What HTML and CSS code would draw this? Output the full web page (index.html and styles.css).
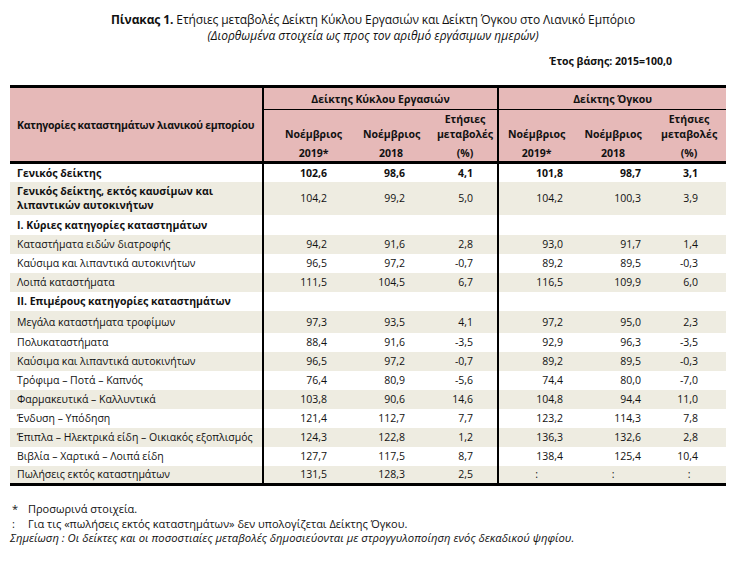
FILE: index.html
```html
<!DOCTYPE html>
<html lang="el">
<head>
    <meta charset="UTF-8">
    <title>Πίνακας 1</title>
    <link rel="stylesheet" href="styles.css">
</head>
<body>
    <div class="page">
        <div class="caption">
            <div class="title"><b>Πίνακας 1.</b> Ετήσιες μεταβολές Δείκτη Κύκλου Εργασιών και Δείκτη Όγκου στο Λιανικό Εμπόριο</div>
            <div class="subtitle">(Διορθωμένα στοιχεία ως προς τον αριθμό εργάσιμων ημερών)</div>
        </div>

        <div class="base-year">Έτος βάσης: 2015=100,0</div>

        <table class="stats">
            <colgroup>
                <col style="width:253px">
                <col style="width:100px">
                <col style="width:56px">
                <col style="width:79px">
                <col style="width:76px">
                <col style="width:78px">
                <col style="width:74px">
            </colgroup>
            <thead>
                <tr class="group-row">
                    <th rowspan="2" class="cat-head">Κατηγορίες καταστημάτων λιανικού εμπορίου</th>
                    <th colspan="3" class="sep">Δείκτης Κύκλου Εργασιών</th>
                    <th colspan="3" class="sep">Δείκτης Όγκου</th>
                </tr>
                <tr class="sub-row">
                    <th class="sep"><span class="l1"></span><span class="l2">Νοέμβριος</span><span class="l3">2019*</span></th>
                    <th><span class="l1"></span><span class="l2">Νοέμβριος</span><span class="l3">2018</span></th>
                    <th class="pct"><span class="l1">Ετήσιες</span><span class="l2">μεταβολές</span><span class="l3">(%)</span></th>
                    <th class="sep"><span class="l1"></span><span class="l2">Νοέμβριος</span><span class="l3">2019*</span></th>
                    <th><span class="l1"></span><span class="l2">Νοέμβριος</span><span class="l3">2018</span></th>
                    <th><span class="l1">Ετήσιες</span><span class="l2">μεταβολές</span><span class="l3">(%)</span></th>
                </tr>
            </thead>
            <tbody>
                <tr class="bold">
                    <td>Γενικός δείκτης</td>
                    <td class="sep">102,6</td><td>98,6</td><td>4,1</td>
                    <td class="sep">101,8</td><td>98,7</td><td>3,1</td>
                </tr>
                <tr class="shade double">
                    <td class="label-bold">Γενικός δείκτης, εκτός καυσίμων και<br>λιπαντικών αυτοκινήτων</td>
                    <td class="sep">104,2</td><td>99,2</td><td>5,0</td>
                    <td class="sep">104,2</td><td>100,3</td><td>3,9</td>
                </tr>
                <tr class="roomy">
                    <td class="label-bold">Ι. Κύριες κατηγορίες καταστημάτων</td>
                    <td class="sep"></td><td></td><td></td>
                    <td class="sep"></td><td></td><td></td>
                </tr>
                <tr class="shade">
                    <td>Καταστήματα ειδών διατροφής</td>
                    <td class="sep">94,2</td><td>91,6</td><td>2,8</td>
                    <td class="sep">93,0</td><td>91,7</td><td>1,4</td>
                </tr>
                <tr>
                    <td>Καύσιμα και λιπαντικά αυτοκινήτων</td>
                    <td class="sep">96,5</td><td>97,2</td><td>-0,7</td>
                    <td class="sep">89,2</td><td>89,5</td><td>-0,3</td>
                </tr>
                <tr class="shade">
                    <td>Λοιπά καταστήματα</td>
                    <td class="sep">111,5</td><td>104,5</td><td>6,7</td>
                    <td class="sep">116,5</td><td>109,9</td><td>6,0</td>
                </tr>
                <tr>
                    <td class="label-bold">ΙΙ. Επιμέρους κατηγορίες καταστημάτων</td>
                    <td class="sep"></td><td></td><td></td>
                    <td class="sep"></td><td></td><td></td>
                </tr>
                <tr class="shade tall">
                    <td>Μεγάλα καταστήματα τροφίμων</td>
                    <td class="sep">97,3</td><td>93,5</td><td>4,1</td>
                    <td class="sep">97,2</td><td>95,0</td><td>2,3</td>
                </tr>
                <tr>
                    <td>Πολυκαταστήματα</td>
                    <td class="sep">88,4</td><td>91,6</td><td>-3,5</td>
                    <td class="sep">92,9</td><td>96,3</td><td>-3,5</td>
                </tr>
                <tr class="shade">
                    <td>Καύσιμα και λιπαντικά αυτοκινήτων</td>
                    <td class="sep">96,5</td><td>97,2</td><td>-0,7</td>
                    <td class="sep">89,2</td><td>89,5</td><td>-0,3</td>
                </tr>
                <tr>
                    <td>Τρόφιμα – Ποτά – Καπνός</td>
                    <td class="sep">76,4</td><td>80,9</td><td>-5,6</td>
                    <td class="sep">74,4</td><td>80,0</td><td>-7,0</td>
                </tr>
                <tr class="shade">
                    <td>Φαρμακευτικά – Καλλυντικά</td>
                    <td class="sep">103,8</td><td>90,6</td><td>14,6</td>
                    <td class="sep">104,8</td><td>94,4</td><td>11,0</td>
                </tr>
                <tr>
                    <td>Ένδυση – Υπόδηση</td>
                    <td class="sep">121,4</td><td>112,7</td><td>7,7</td>
                    <td class="sep">123,2</td><td>114,3</td><td>7,8</td>
                </tr>
                <tr class="shade">
                    <td>Έπιπλα – Ηλεκτρικά είδη – Οικιακός εξοπλισμός</td>
                    <td class="sep">124,3</td><td>122,8</td><td>1,2</td>
                    <td class="sep">136,3</td><td>132,6</td><td>2,8</td>
                </tr>
                <tr>
                    <td>Βιβλία – Χαρτικά – Λοιπά είδη</td>
                    <td class="sep">127,7</td><td>117,5</td><td>8,7</td>
                    <td class="sep">138,4</td><td>125,4</td><td>10,4</td>
                </tr>
                <tr class="shade">
                    <td>Πωλήσεις εκτός καταστημάτων</td>
                    <td class="sep">131,5</td><td>128,3</td><td>2,5</td>
                    <td class="sep na">:</td><td class="na">:</td><td class="na">:</td>
                </tr>
            </tbody>
        </table>

        <div class="notes">
            <div class="note"><span class="mark">*</span>Προσωρινά στοιχεία.</div>
            <div class="note"><span class="mark">:</span>Για τις «πωλήσεις εκτός καταστημάτων» δεν υπολογίζεται Δείκτης Όγκου.</div>
            <div class="note remark">Σημείωση : Οι δείκτες και οι ποσοστιαίες μεταβολές δημοσιεύονται με στρογγυλοποίηση ενός δεκαδικού ψηφίου.</div>
        </div>
    </div>
</body>
</html>
```

FILE: styles.css
```css
:root {
    --pink: #e6b9b8;
    --shade: #eeece1;
    --ink: #111111;
}

* {
    margin: 0;
    padding: 0;
    box-sizing: border-box;
}

body {
    background: #ffffff;
    color: var(--ink);
    font-family: 'Open Sans', 'Noto Sans', sans-serif;
    font-size: 10.5px;
}

.page {
    padding: 12px 13px 0 10px;
}

.caption {
    text-align: center;
    padding-left: 10px;
}

.title {
    font-size: 12px;
    line-height: 16px;
    letter-spacing: -0.1px;
}

.subtitle {
    font-style: italic;
    font-size: 12px;
    line-height: 15px;
}

.base-year {
    text-align: right;
    font-weight: bold;
    font-size: 10.5px;
    line-height: 16px;
    margin-top: 10px;
    padding-right: 54px;
}

.stats {
    width: 716px;
    table-layout: fixed;
    border-collapse: collapse;
    margin-top: 16px;
    border-top: 3px solid #000;
    border-bottom: 3px solid #000;
}

.stats th {
    background: var(--pink);
    font-weight: bold;
    text-align: center;
    vertical-align: middle;
}

.stats .sep {
    border-left: 2px solid #000;
}

.group-row th {
    height: 23px;
    border-bottom: 1px solid #000;
}

.stats .cat-head {
    text-align: left;
    padding-left: 7px;
    white-space: nowrap;
    letter-spacing: -0.25px;
    border-bottom: 3px solid #000;
}

.sub-row th {
    height: 53px;
    border-bottom: 3px solid #000;
    padding-top: 2px;
}

.sub-row span {
    display: block;
    height: 15px;
    line-height: 15px;
}

.sub-row .l3 {
    margin-top: 4px;
}

.sub-row .pct {
    padding-left: 14px;
}

.stats td {
    height: 19px;
    line-height: 14px;
    text-align: right;
    white-space: nowrap;
    vertical-align: middle;
}

.stats td:first-child {
    text-align: left;
    padding-left: 7px;
}

.stats td:nth-child(2) { padding-right: 36px; }
.stats td:nth-child(3) { padding-right: 14px; }
.stats td:nth-child(4) { padding-right: 24px; }
.stats td:nth-child(5) { padding-right: 11px; }
.stats td:nth-child(6) { padding-right: 11px; }
.stats td:nth-child(7) { padding-right: 28px; }

.stats td.na {
    text-align: center;
    padding-right: 0;
}

.stats tr.shade td {
    background: var(--shade);
}

.stats tr.double td {
    height: 33px;
}

.stats tr.roomy td {
    height: 20px;
}

.stats tr.tall td {
    height: 22px;
}

.stats tr.bold td,
.stats td.label-bold {
    font-weight: bold;
}

.notes {
    margin-top: 16px;
    font-size: 11px;
    line-height: 14.5px;
}

.note {
    padding-left: 2px;
}

.mark {
    display: inline-block;
    width: 16px;
}

.remark {
    font-style: italic;
    font-size: 11.3px;
    padding-left: 0;
}
```
